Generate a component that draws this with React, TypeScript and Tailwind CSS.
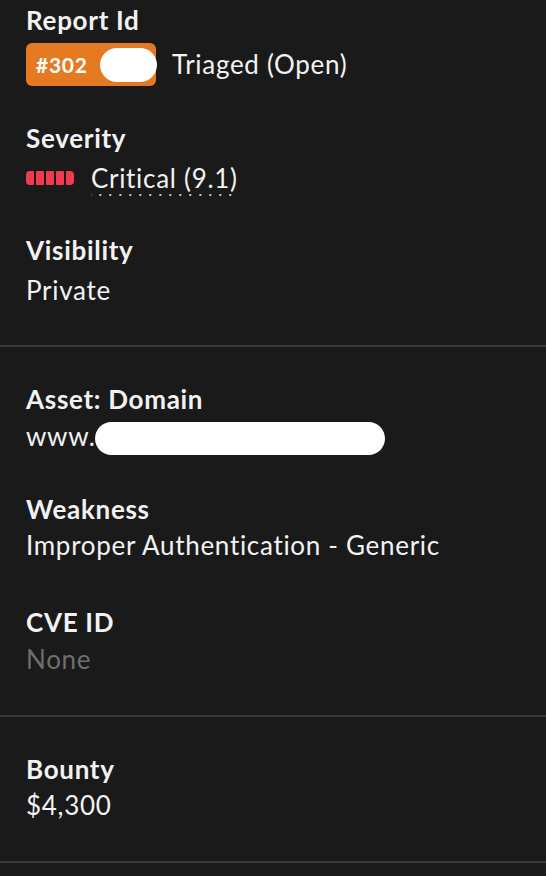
import React from 'react';

const Label: React.FC<{ children: React.ReactNode; className?: string }> = ({ children, className = '' }) => (
    <div className={`h-9 text-[26px] leading-9 font-bold text-[#f2f2f2] ${className}`}>{children}</div>
);

const SeverityBars: React.FC = () => (
    <div className="flex items-center gap-[2px]">
        <span className="h-[14px] w-[8px] rounded-l-[4px] rounded-r-[1px] bg-[#f03a4e]" />
        <span className="h-[14px] w-[8px] rounded-[1px] bg-[#f03a4e]" />
        <span className="h-[14px] w-[8px] rounded-[1px] bg-[#f03a4e]" />
        <span className="h-[14px] w-[8px] rounded-[1px] bg-[#f03a4e]" />
        <span className="h-[14px] w-[8px] rounded-r-[4px] rounded-l-[1px] bg-[#f03a4e]" />
    </div>
);

const Divider: React.FC = () => <div className="h-[2px] w-full bg-[#3a3a3a]" />;

const App: React.FC = () => {
    return (
        <div className="min-h-screen bg-[#1a1a1a] text-[#f2f2f2] tracking-[0.7px] font-['Lato','Liberation_Sans',sans-serif]">

            {/* Report info */}
            <div className="px-[26px] pt-[2px] pb-[37px]">
                <Label>Report Id</Label>
                <div className="mt-[5px] flex h-[43px] items-center gap-4">
                    <div className="relative flex h-[43px] w-[130px] items-center rounded-md bg-[#e57a22] pl-[10px] text-[21px] font-bold text-white">
                        #302
                        <span className="absolute left-[74px] top-[5px] h-[34px] w-[57px] rounded-full bg-white" />
                    </div>
                    <span className="text-[26px]">Triaged (Open)</span>
                </div>

                <Label className="mt-[34px]">Severity</Label>
                <div className="mt-[4px] flex h-9 items-center gap-[17px]">
                    <SeverityBars />
                    <span className="h-9 text-[26px] leading-9 bg-[linear-gradient(to_right,#c8c8c8_2px,transparent_2px)] bg-[length:10px_2px] bg-bottom bg-repeat-x">
                        Critical (9.1)
                    </span>
                </div>

                <Label className="mt-[36px]">Visibility</Label>
                <div className="mt-[4px] h-9 text-[26px] leading-9">Private</div>
            </div>

            <Divider />

            {/* Asset details */}
            <div className="px-[26px] pt-[34px] pb-[38px]">
                <Label>Asset: Domain</Label>
                <div className="mt-[1px] flex h-9 items-center text-[26px] leading-9">
                    www.
                    <span className="-ml-[1px] mt-[4px] inline-block h-[33px] w-[290px] rounded-full bg-white" />
                </div>

                <Label className="mt-[37px]">Weakness</Label>
                <div className="h-9 text-[26px] leading-9">Improper Authentication - Generic</div>

                <Label className="mt-[41px]">CVE ID</Label>
                <div className="mt-[1px] h-9 text-[26px] leading-9 text-[#6e6e6e]">None</div>
            </div>

            <Divider />

            {/* Bounty */}
            <div className="px-[26px] pt-[34px] pb-[38px]">
                <Label>Bounty</Label>
                <div className="h-9 text-[26px] leading-9">$4,300</div>
            </div>

            <Divider />
        </div>
    );
};

export default App;
